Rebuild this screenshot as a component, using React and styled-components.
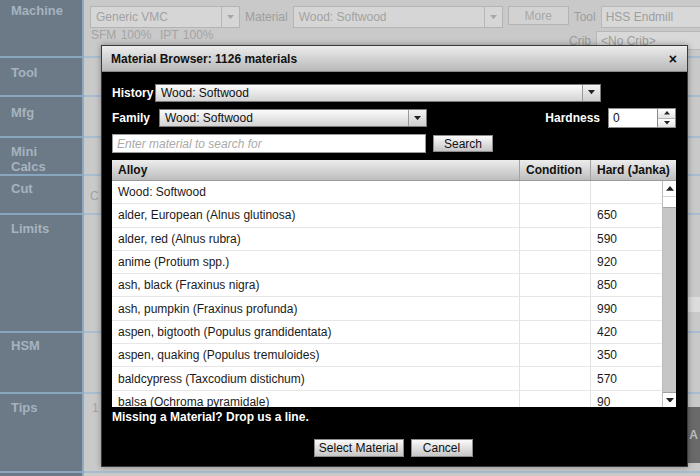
import React from 'react';
import styled, { createGlobalStyle } from 'styled-components';

const GlobalStyle = createGlobalStyle`
  html, body {
    margin: 0;
    padding: 0;
    background: #c9c9c9;
  }
  * {
    box-sizing: border-box;
  }
`;

const Page = styled.div`
  position: relative;
  width: 700px;
  height: 476px;
  overflow: hidden;
  display: flex;
  font-family: "Liberation Sans", Arial, sans-serif;
  font-size: 12px;
  background: #c9c9c9;
`;

const Sidebar = styled.div`
  width: 84px;
  flex: none;
  background: #6c7a87;
  border-right: 2px solid #8eaac3;
`;

const NavItem = styled.div`
  height: ${p => p.$h}px;
  padding: ${p => p.$pt || 5}px 0 0 11px;
  border-bottom: 2px solid #89a6bf;
  color: #a6b3bf;
  font-weight: bold;
  font-size: 13px;
  line-height: 15px;
`;

const Main = styled.div`
  flex: 1;
  display: flex;
  flex-direction: column;
`;

const Section = styled.div`
  height: ${p => p.$h}px;
  border-bottom: 2px solid #a9bdd0;
  display: flex;
  align-items: flex-start;
  padding: ${p => p.$pad || '0 0 0 6px'};
  color: #a3a3a3;
`;

const TopForm = styled.div`
  display: flex;
  flex-direction: column;
  padding: 6px 0 0 6px;
  width: 100%;
`;

const FormRow = styled.div`
  display: flex;
  align-items: ${p => p.$align || 'center'};
  gap: 5px;
  height: ${p => p.$h}px;
`;

const DimSelect = styled.div`
  width: ${p => p.$w}px;
  height: 22px;
  border: 1px solid #b4b4b4;
  background: #d6d6d6;
  display: flex;
  align-items: center;
  color: #a2a2a2;
  font-size: 12px;
`;

const DimSelectText = styled.span`
  flex: 1;
  padding-left: 5px;
`;

const DimArrow = styled.span`
  width: 18px;
  height: 100%;
  border-left: 1px solid #b8b8b8;
  display: flex;
  align-items: center;
  justify-content: center;
`;

const DimLabel = styled.span`
  color: #9d9d9d;
  font-size: 12px;
  margin-top: ${p => p.$mt || 0}px;
`;

const DimButton = styled.div`
  width: 61px;
  height: 19px;
  border: 1px solid #b4b4b4;
  background: #d2d2d2;
  display: flex;
  align-items: center;
  justify-content: center;
  color: #a8a8a8;
  align-self: flex-start;
`;

const DimInput = styled.div`
  flex: ${p => (p.$w ? 'none' : 1)};
  width: ${p => (p.$w ? `${p.$w}px` : 'auto')};
  height: ${p => p.$h || 22}px;
  margin-top: ${p => p.$mt || 0}px;
  border: 1px solid #b8b8b8;
  border-right: none;
  background: #d8d8d8;
  padding-left: 4px;
  display: flex;
  align-items: center;
  color: #9e9e9e;
`;

const StatText = styled.span`
  color: #a4a4a4;
  font-size: 12px;
  margin-left: 1px;
  word-spacing: 1px;
`;

const SideBand = styled.div`
  margin-left: auto;
  width: ${p => p.$w}px;
  height: ${p => p.$h}px;
  margin-top: ${p => p.$top}px;
  background: ${p => p.$bg};
  color: #bdbdbd;
  font-weight: bold;
  display: flex;
  align-items: center;
  justify-content: flex-end;
  padding-right: 2px;
`;

/* modal */

const Modal = styled.div`
  position: absolute;
  left: 101px;
  top: 45px;
  width: 587px;
  height: 422px;
  background: #000;
  border: 1px solid #3a3a3a;
  box-shadow: 0 0 6px rgba(0, 0, 0, 0.35);
  display: flex;
  flex-direction: column;
`;

const TitleBar = styled.div`
  height: 26px;
  flex: none;
  background: linear-gradient(#ececec, #b9b9b9);
  border-bottom: 1px solid #8a8a8a;
  display: flex;
  align-items: center;
  justify-content: space-between;
  padding: 0 10px 0 9px;
  font-weight: bold;
  font-size: 12px;
  color: #111;
`;

const Close = styled.span`
  font-size: 14px;
  font-weight: bold;
  line-height: 1;
`;

const Body = styled.div`
  flex: 1;
  display: flex;
  flex-direction: column;
  padding: 0 11px 0 10px;
`;

const Row = styled.div`
  display: flex;
  align-items: center;
  height: ${p => p.$h}px;
  margin-top: ${p => p.$mt}px;
`;

const Label = styled.span`
  color: #fff;
  font-weight: bold;
  font-size: 12px;
  width: ${p => (p.$w ? `${p.$w}px` : 'auto')};
  flex: none;
`;

const Select = styled.div`
  width: ${p => p.$w}px;
  height: 18px;
  border: 1px solid #7a7a7a;
  background: linear-gradient(#fbfbfb, #d3d3d3);
  display: flex;
  align-items: center;
  color: #111;
  font-size: 12px;
`;

const SelectText = styled.span`
  flex: 1;
  padding-left: 5px;
`;

const ArrowBox = styled.span`
  width: 18px;
  height: 100%;
  border-left: 1px solid #9a9a9a;
  background: linear-gradient(#f3f3f3, #cfcfcf);
  display: flex;
  align-items: center;
  justify-content: center;
`;

const Spacer = styled.div`
  flex: 1;
`;

const NumInput = styled.div`
  width: 50px;
  height: 20px;
  margin-left: 8px;
  background: #fff;
  border: 1px solid #8a8a8a;
  padding-left: 4px;
  display: flex;
  align-items: center;
  color: #111;
`;

const Spinner = styled.div`
  width: 18px;
  height: 20px;
  display: flex;
  flex-direction: column;
  border: 1px solid #8a8a8a;
  border-left: none;
  background: #fff;
`;

const SpinHalf = styled.div`
  flex: 1;
  display: flex;
  align-items: center;
  justify-content: center;
  border-top: ${p => (p.$bottom ? '1px solid #b5b5b5' : 'none')};
  background: linear-gradient(#fff, #e4e4e4);
`;

const SearchInput = styled.div`
  width: 314px;
  height: 19px;
  background: #fff;
  border: 1px solid #9a9a9a;
  padding-left: 4px;
  display: flex;
  align-items: center;
  color: #a9a9a9;
  font-style: italic;
  font-size: 12px;
`;

const Button = styled.div`
  width: ${p => p.$w}px;
  height: ${p => p.$h || 17}px;
  margin-left: ${p => p.$ml || 0}px;
  border: 1px solid #8c8c8c;
  background: linear-gradient(#fafafa, #c6c6c6);
  display: flex;
  align-items: center;
  justify-content: center;
  color: #111;
  font-size: 12px;
`;

const Table = styled.div`
  margin-top: 7px;
  width: 564px;
  display: flex;
  flex-direction: column;
  background: #fff;
`;

const HeadRow = styled.div`
  display: flex;
  height: 21px;
  background: linear-gradient(#ededed, #bdbdbd);
  border-bottom: 1px solid #9a9a9a;
`;

const HeadCell = styled.div`
  width: ${p => p.$w}px;
  padding-left: 6px;
  display: flex;
  align-items: center;
  font-weight: bold;
  color: #111;
  border-right: ${p => (p.$last ? 'none' : '1px solid #a3a3a3')};
`;

const TableBody = styled.div`
  display: flex;
  height: 226px;
`;

const Rows = styled.div`
  flex: 1;
  overflow: hidden;
`;

const DataRow = styled.div`
  display: flex;
  height: 23.3px;
  border-bottom: 1px solid #e6e6e6;
`;

const Cell = styled.div`
  width: ${p => p.$w}px;
  padding-left: 6px;
  display: flex;
  align-items: center;
  color: #1a1a1a;
  border-right: ${p => (p.$last ? 'none' : '1px solid #e2e2e2')};
  white-space: nowrap;
`;

const Scrollbar = styled.div`
  width: 14px;
  display: flex;
  flex-direction: column;
  border-left: 1px solid #bdbdbd;
`;

const ScrollBtn = styled.div`
  height: 15px;
  background: #fff;
  display: flex;
  align-items: center;
  justify-content: center;
  border-top: ${p => (p.$down ? '1px solid #a0a0a0' : 'none')};
`;

const Thumb = styled.div`
  height: 12px;
  background: #fff;
  border-top: 1px solid #d6d6d6;
  border-bottom: 1px solid #a6a6a6;
`;

const Track = styled.div`
  flex: 1;
  background: #c6c6c6;
`;

const Note = styled.div`
  margin-top: 3px;
  color: #fff;
  font-weight: bold;
  line-height: 14px;
`;

const Footer = styled.div`
  margin-top: 15px;
  display: flex;
  justify-content: center;
  gap: 7px;
  padding-right: 2px;
`;

const Tri = ({ up, size = 7, color = '#222' }) => (
  <svg width={size} height={size * 0.6} viewBox="0 0 10 6">
    {up ? <polygon points="0,6 10,6 5,0" fill={color} /> : <polygon points="0,0 10,0 5,6" fill={color} />}
  </svg>
);

const nav = [
  { label: 'Machine', h: 58, pt: 3 },
  { label: 'Tool', h: 39, pt: 7 },
  { label: 'Mfg', h: 41, pt: 8 },
  { label: <>Mini<br />Calcs</>, h: 38, pt: 6 },
  { label: 'Cut', h: 39, pt: 5 },
  { label: 'Limits', h: 118, pt: 6 },
  { label: 'HSM', h: 61, pt: 5 },
  { label: 'Tips', h: 79, pt: 6 },
];

const materials = [
  ['Wood: Softwood', ''],
  ['alder, European (Alnus glutinosa)', '650'],
  ['alder, red (Alnus rubra)', '590'],
  ['anime (Protium spp.)', '920'],
  ['ash, black (Fraxinus nigra)', '850'],
  ['ash, pumpkin (Fraxinus profunda)', '990'],
  ['aspen, bigtooth (Populus grandidentata)', '420'],
  ['aspen, quaking (Populus tremuloides)', '350'],
  ['baldcypress (Taxcodium distichum)', '570'],
  ['balsa (Ochroma pyramidale)', '90'],
];

const App = () => (
  <Page>
    <GlobalStyle />
    <Sidebar>
      {nav.map((n, i) => (
        <NavItem key={i} $h={n.h} $pt={n.pt}>{n.label}</NavItem>
      ))}
    </Sidebar>
    <Main>
      <Section $h={58} $pad="0">
        <TopForm>
          <FormRow $h={22}>
            <DimSelect $w={150}>
              <DimSelectText>Generic VMC</DimSelectText>
              <DimArrow><Tri color="#a8a8a8" /></DimArrow>
            </DimSelect>
            <DimLabel>Material</DimLabel>
            <DimSelect $w={210}>
              <DimSelectText>Wood: Softwood</DimSelectText>
              <DimArrow><Tri color="#a8a8a8" /></DimArrow>
            </DimSelect>
            <DimButton>More</DimButton>
            <DimLabel>Tool</DimLabel>
            <DimInput>HSS Endmill</DimInput>
          </FormRow>
          <FormRow $h={24} $align="flex-start">
            <StatText>SFM 100%&nbsp; IPT 100%</StatText>
            <Spacer />
            <DimLabel $mt={6}>Crib</DimLabel>
            <DimInput $w={104} $h={19} $mt={3}>&lt;No Crib&gt;</DimInput>
          </FormRow>
        </TopForm>
      </Section>
      <Section $h={39} />
      <Section $h={41} />
      <Section $h={38} />
      <Section $h={39} $pad="13px 0 0 6px">C</Section>
      <Section $h={118}>
        <SideBand $w={30} $h={15} $top={82} $bg="#dcdcdc" />
      </Section>
      <Section $h={61} />
      <Section $h={79} $pad="7px 0 0 8px">
        1
        <SideBand $w={40} $h={56} $top={6} $bg="#6a6a6a">A</SideBand>
      </Section>
    </Main>

    <Modal>
      <TitleBar>
        <span>Material Browser: 1126 materials</span>
        <Close>×</Close>
      </TitleBar>
      <Body>
        <Row $h={17} $mt={12}>
          <Label $w={43}>History</Label>
          <Select $w={446}>
            <SelectText>Wood: Softwood</SelectText>
            <ArrowBox><Tri /></ArrowBox>
          </Select>
        </Row>
        <Row $h={20} $mt={7}>
          <Label $w={47}>Family</Label>
          <Select $w={268}>
            <SelectText>Wood: Softwood</SelectText>
            <ArrowBox><Tri /></ArrowBox>
          </Select>
          <Spacer />
          <Label>Hardness</Label>
          <NumInput>0</NumInput>
          <Spinner>
            <SpinHalf><Tri up size={6} /></SpinHalf>
            <SpinHalf $bottom><Tri size={6} /></SpinHalf>
          </Spinner>
        </Row>
        <Row $h={19} $mt={6}>
          <SearchInput>Enter material to search for</SearchInput>
          <Button $w={60} $ml={7}>Search</Button>
        </Row>
        <Table>
          <HeadRow>
            <HeadCell $w={408}>Alloy</HeadCell>
            <HeadCell $w={71}>Condition</HeadCell>
            <HeadCell $w={85} $last>Hard (Janka)</HeadCell>
          </HeadRow>
          <TableBody>
            <Rows>
              {materials.map(([name, hard]) => (
                <DataRow key={name}>
                  <Cell $w={408}>{name}</Cell>
                  <Cell $w={71} />
                  <Cell $w={71} $last>{hard}</Cell>
                </DataRow>
              ))}
            </Rows>
            <Scrollbar>
              <ScrollBtn><Tri up size={8} /></ScrollBtn>
              <Thumb />
              <Track />
              <ScrollBtn $down><Tri size={8} /></ScrollBtn>
            </Scrollbar>
          </TableBody>
        </Table>
        <Note>Missing a Material? Drop us a line.</Note>
        <Footer>
          <Button $w={90} $h={18}>Select Material</Button>
          <Button $w={62} $h={18}>Cancel</Button>
        </Footer>
      </Body>
    </Modal>
  </Page>
);

export default App;
